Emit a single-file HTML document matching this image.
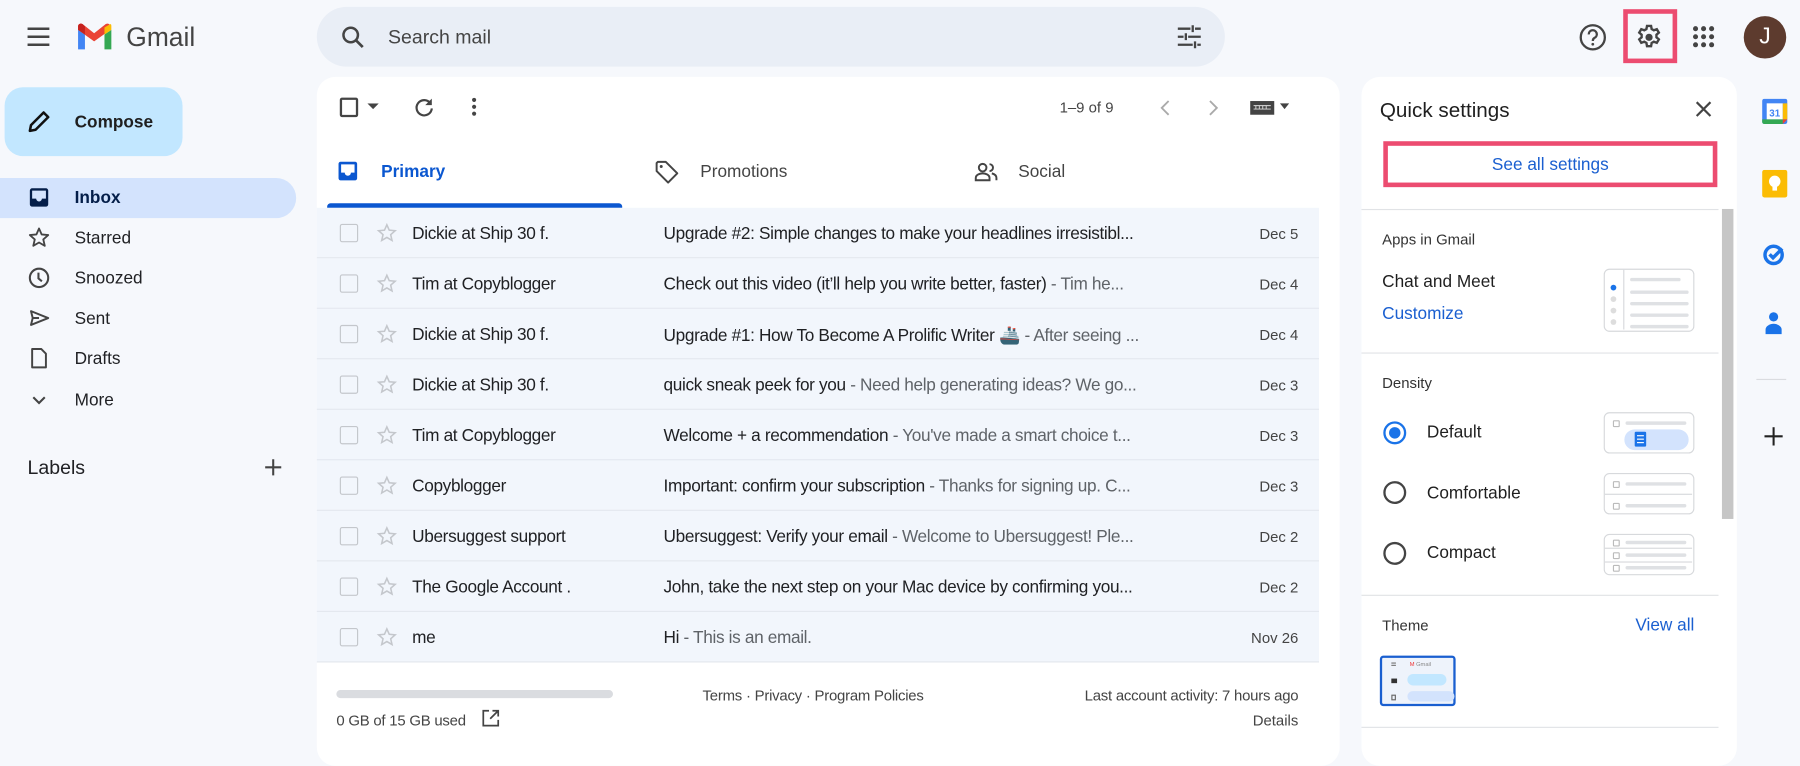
<!DOCTYPE html>
<html><head><meta charset="utf-8">
<style>
*{box-sizing:border-box;margin:0;padding:0}
html,body{width:1800px;height:744px;overflow:hidden;background:#f6f8fc}
body{font-family:"Liberation Sans",Arial,sans-serif;color:#202124}
#w{position:absolute;left:0;top:0;width:1568px;height:648px;transform:scale(1.14796,1.14815);transform-origin:0 0;background:#f6f8fc}
.a{position:absolute}
svg{display:block}
.row{position:absolute;left:0;width:873px;height:44px;background:#f2f6fc;border-bottom:1px solid #e3e7ee;font-size:15px}
.row .cb{position:absolute;left:20px;top:14px;width:16px;height:16px;border:1.6px solid #c4c7cc;border-radius:2px}
.row .st{position:absolute;left:52px;top:13px}
.row .sn{position:absolute;left:83px;top:14px;color:#202124;letter-spacing:-0.3px}
.row .sb{position:absolute;left:302px;top:14px;width:450px;white-space:nowrap;overflow:hidden;text-overflow:ellipsis;letter-spacing:-0.3px}
.row .sb span{color:#5f6368}
.row .dt{position:absolute;right:18px;top:15px;font-size:13px;color:#444}
.nav{position:absolute;left:0;width:257px;height:34px;font-size:15px;color:#202124}
.nav .ic{position:absolute;left:24px;top:7px}
.nav .t{position:absolute;left:65px;top:9px}
.hr{position:absolute;height:1px;background:#e1e3e6}
.blue{color:#0b57d0}
.ill{position:absolute;left:1397px;width:79px;border:1.5px solid #d7d9dc;border-radius:5px;background:#fff}
.ln{position:absolute;height:3px;background:#dfe1e4;border-radius:2px}
.sq{position:absolute;width:6px;height:6px;border:1px solid #bbb;border-radius:1px}
</style></head><body>
<div id="w">
<svg class="a" style="left:22px;top:22px" width="24" height="20" viewBox="0 0 24 20"><path d="M2 3h19M2 10h19M2 17h19" stroke="#444" stroke-width="2.2"/></svg>
<svg class="a" style="left:66px;top:20px" width="33" height="25" viewBox="0 0 33 25">
<path d="M2 6v17h6V10z" fill="#4285f4"/><path d="M25 10v13h6V6z" fill="#34a853"/>
<path d="M2 6l14 10 14-10V3c0-2-2-3-4-2L16 9 6 1C4 0 2 1 2 3z" fill="#ea4335"/>
<path d="M25 4l5-3c1 0 1 1 1 2v3l-6 4z" fill="#fbbc04"/><path d="M2 3c0-2 2-3 4-2l2 2v7L2 6z" fill="#c5221f"/></svg>
<div class="a" style="left:110px;top:19px;font-size:23px;color:#444">Gmail</div>
<div class="a" style="left:276px;top:6px;width:791px;height:52px;background:#e9eef6;border-radius:26px"></div>
<svg class="a" style="left:296px;top:21px" width="24" height="24" viewBox="0 0 24 24"><circle cx="9.5" cy="9.5" r="6.3" fill="none" stroke="#444" stroke-width="2.2"/><path d="M14 14l6 6" stroke="#444" stroke-width="2.4"/></svg>
<div class="a" style="left:338px;top:23px;font-size:17px;color:#444">Search mail</div>
<svg class="a" style="left:1024px;top:21px" width="24" height="22" viewBox="0 0 24 22"><path d="M2 4h11M17 4h5M2 11h5M11 11h11M2 18h13M19 18h3M15 1v6M9 8v6M17 15v6" stroke="#444" stroke-width="2"/></svg>
<svg class="a" style="left:1375px;top:20px" width="25" height="25" viewBox="0 0 25 25"><circle cx="12.5" cy="12.5" r="10.5" fill="none" stroke="#444" stroke-width="2"/><path d="M9 10a3.5 3.5 0 1 1 5 3c-1.3.7-1.5 1.4-1.5 2.7" fill="none" stroke="#444" stroke-width="2"/><circle cx="12.5" cy="18.5" r="1.2" fill="#444"/></svg>
<div class="a" style="left:1414px;top:8px;width:47px;height:47px;border:4px solid #ec4c70"></div>
<svg class="a" style="left:1424px;top:20px" width="25" height="25" viewBox="0 0 24 24"><path fill="none" stroke="#444" stroke-width="2" d="M10.3 2.5h3.4l.5 2.6 1.8 1 2.5-.9 1.7 2.9-2 1.7v2.2l2 1.7-1.7 2.9-2.5-.9-1.8 1-.5 2.7h-3.4l-.5-2.7-1.8-1-2.5.9-1.7-2.9 2-1.7v-2.2l-2-1.7 1.7-2.9 2.5.9 1.8-1z"/><circle cx="12" cy="12" r="3" fill="#444"/></svg>
<svg class="a" style="left:1474px;top:22px" width="20" height="20" viewBox="0 0 20 20" fill="#444"><circle cx="3" cy="3" r="2.2"/><circle cx="10" cy="3" r="2.2"/><circle cx="17" cy="3" r="2.2"/><circle cx="3" cy="10" r="2.2"/><circle cx="10" cy="10" r="2.2"/><circle cx="17" cy="10" r="2.2"/><circle cx="3" cy="17" r="2.2"/><circle cx="10" cy="17" r="2.2"/><circle cx="17" cy="17" r="2.2"/></svg>
<div class="a" style="left:1519px;top:14px;width:37px;height:37px;border-radius:50%;background:#5d3b2e;color:#fff;font-size:20px;text-align:center;line-height:37px">J</div>

<div class="a" style="left:4px;top:76px;width:155px;height:60px;background:#c2e7ff;border-radius:16px"></div>
<svg class="a" style="left:23px;top:95px" width="22" height="22" viewBox="0 0 22 22"><path d="M3 19l1-5L15 3l4 4L8 18z" fill="none" stroke="#111" stroke-width="2.2" stroke-linejoin="round"/></svg>
<div class="a" style="left:65px;top:98px;font-size:15px;font-weight:bold;color:#1f1f1f">Compose</div>
<div class="a" style="left:0;top:155px;width:258px;height:35px;background:#d3e3fd;border-radius:0 18px 18px 0"></div>
<div class="nav" style="top:155px"><svg class="ic" width="20" height="20" viewBox="0 0 20 20"><rect x="2" y="2" width="16" height="16" rx="2" fill="#041e49"/><path d="M4 4h12v7h-3.5a2.5 2.5 0 0 1-5 0H4z" fill="#d3e3fd"/></svg><div class="t" style="font-weight:bold;color:#041e49">Inbox</div></div>
<div class="nav" style="top:190px"><svg class="ic" width="20" height="20" viewBox="0 0 20 20"><path d="M10 2l2.3 5.2 5.7.5-4.3 3.8 1.3 5.6L10 14.2 5 17.1l1.3-5.6L2 7.7l5.7-.5z" fill="none" stroke="#444" stroke-width="1.6" stroke-linejoin="round"/></svg><div class="t">Starred</div></div>
<div class="nav" style="top:225px"><svg class="ic" width="20" height="20" viewBox="0 0 20 20"><circle cx="10" cy="10" r="8" fill="none" stroke="#444" stroke-width="1.8"/><path d="M9.5 5.5v5l3 2.5" fill="none" stroke="#444" stroke-width="1.8"/></svg><div class="t">Snoozed</div></div>
<div class="nav" style="top:260px"><svg class="ic" width="20" height="20" viewBox="0 0 20 20"><path d="M3 4l15 6-15 6 1.5-6z M4.5 10H10" fill="none" stroke="#444" stroke-width="1.7" stroke-linejoin="round"/></svg><div class="t">Sent</div></div>
<div class="nav" style="top:295px"><svg class="ic" width="20" height="20" viewBox="0 0 20 20"><path d="M4 2h8l4 4v12H4z" fill="none" stroke="#444" stroke-width="1.7" stroke-linejoin="round"/></svg><div class="t">Drafts</div></div>
<div class="nav" style="top:331px"><svg class="ic" width="20" height="20" viewBox="0 0 20 20"><path d="M5 8l5 5 5-5" fill="none" stroke="#444" stroke-width="1.8"/></svg><div class="t">More</div></div>
<div class="a" style="left:24px;top:398px;font-size:17px;color:#202124">Labels</div>
<svg class="a" style="left:230px;top:399px" width="16" height="16" viewBox="0 0 16 16"><path d="M8 1v14M1 8h14" stroke="#444" stroke-width="1.8"/></svg>

<div class="a" style="left:276px;top:67px;width:891px;height:600px;background:#fff;border-radius:16px"></div>
<div class="a" style="left:296px;top:85px;width:16px;height:17px;border:2px solid #444;border-radius:2px"></div>
<svg class="a" style="left:320px;top:90px" width="10" height="6" viewBox="0 0 10 6"><path d="M0 0h10L5 5z" fill="#444"/></svg>
<svg class="a" style="left:360px;top:84px" width="19" height="19" viewBox="0 0 20 20"><path d="M15.5 6A7 7 0 1 0 17 11" fill="none" stroke="#444" stroke-width="2"/><path d="M17 2v6h-6z" fill="#444"/></svg>
<svg class="a" style="left:410px;top:84px" width="6" height="18" viewBox="0 0 6 18" fill="#444"><circle cx="3" cy="3" r="1.8"/><circle cx="3" cy="9" r="1.8"/><circle cx="3" cy="15" r="1.8"/></svg>
<div class="a" style="left:923px;top:86px;font-size:13px;color:#444">1–9 of 9</div>
<svg class="a" style="left:1010px;top:86px" width="10" height="16" viewBox="0 0 10 16"><path d="M8 2L2 8l6 6" fill="none" stroke="#aaa" stroke-width="1.6"/></svg>
<svg class="a" style="left:1052px;top:86px" width="10" height="16" viewBox="0 0 10 16"><path d="M2 2l6 6-6 6" fill="none" stroke="#aaa" stroke-width="1.6"/></svg>
<svg class="a" style="left:1089px;top:87px" width="34" height="13" viewBox="0 0 34 13"><rect x="0" y="1" width="21" height="12" fill="#444"/><path d="M3 5h15M3 8h15M5 5v3M8 5v3M11 5v3M14 5v3" stroke="#ddd" stroke-width="0.8"/><path d="M26 3h8l-4 5z" fill="#444"/></svg>

<svg class="a" style="left:294px;top:140px" width="18" height="18" viewBox="0 0 20 20"><rect x="1" y="1" width="18" height="18" rx="2" fill="#0b57d0"/><path d="M3.5 3.5h13v8h-3.5a3 3 0 0 1-6 0H3.5z" fill="#fff"/></svg>
<div class="a blue" style="left:332px;top:141px;font-size:15px;font-weight:bold">Primary</div>
<div class="a" style="left:285px;top:177px;width:257px;height:4px;background:#0b57d0;border-radius:3px 3px 0 0"></div>
<svg class="a" style="left:570px;top:139px" width="22" height="22" viewBox="0 0 22 22"><path d="M2 3v7l10 10 8-8L10 2H3z" fill="none" stroke="#444" stroke-width="1.7" stroke-linejoin="round"/><circle cx="6" cy="6" r="1.3" fill="#444"/></svg>
<div class="a" style="left:610px;top:141px;font-size:15px;color:#444">Promotions</div>
<svg class="a" style="left:848px;top:140px" width="22" height="20" viewBox="0 0 22 20"><circle cx="8" cy="6" r="3.3" fill="none" stroke="#444" stroke-width="1.7"/><path d="M2 17v-2c0-3 4-4 6-4s6 1 6 4v2z" fill="none" stroke="#444" stroke-width="1.7"/><path d="M14 3a3 3 0 0 1 0 6M16 11c2 .5 4 1.5 4 4v2" fill="none" stroke="#444" stroke-width="1.7"/></svg>
<div class="a" style="left:887px;top:141px;font-size:15px;color:#444">Social</div>

<div class="a" style="left:276px;top:181px;width:873px;height:396px">
<div class="row" style="top:0"><div class="cb"></div><svg class="st" width="18" height="18" viewBox="0 0 20 20"><path d="M10 2l2.3 5.2 5.7.5-4.3 3.8 1.3 5.6L10 14.2 5 17.1l1.3-5.6L2 7.7l5.7-.5z" fill="none" stroke="#c4c7cc" stroke-width="1.5"/></svg><div class="sn">Dickie at Ship 30 f.</div><div class="sb">Upgrade #2: Simple changes to make your headlines irresistibl...</div><div class="dt">Dec 5</div></div>
<div class="row" style="top:44px"><div class="cb"></div><svg class="st" width="18" height="18" viewBox="0 0 20 20"><path d="M10 2l2.3 5.2 5.7.5-4.3 3.8 1.3 5.6L10 14.2 5 17.1l1.3-5.6L2 7.7l5.7-.5z" fill="none" stroke="#c4c7cc" stroke-width="1.5"/></svg><div class="sn">Tim at Copyblogger</div><div class="sb">Check out this video (it’ll help you write better, faster) <span>- Tim he...</span></div><div class="dt">Dec 4</div></div>
<div class="row" style="top:88px"><div class="cb"></div><svg class="st" width="18" height="18" viewBox="0 0 20 20"><path d="M10 2l2.3 5.2 5.7.5-4.3 3.8 1.3 5.6L10 14.2 5 17.1l1.3-5.6L2 7.7l5.7-.5z" fill="none" stroke="#c4c7cc" stroke-width="1.5"/></svg><div class="sn">Dickie at Ship 30 f.</div><div class="sb">Upgrade #1: How To Become A Prolific Writer 🚢 <span>- After seeing ...</span></div><div class="dt">Dec 4</div></div>
<div class="row" style="top:132px"><div class="cb"></div><svg class="st" width="18" height="18" viewBox="0 0 20 20"><path d="M10 2l2.3 5.2 5.7.5-4.3 3.8 1.3 5.6L10 14.2 5 17.1l1.3-5.6L2 7.7l5.7-.5z" fill="none" stroke="#c4c7cc" stroke-width="1.5"/></svg><div class="sn">Dickie at Ship 30 f.</div><div class="sb">quick sneak peek for you <span>- Need help generating ideas? We go...</span></div><div class="dt">Dec 3</div></div>
<div class="row" style="top:176px"><div class="cb"></div><svg class="st" width="18" height="18" viewBox="0 0 20 20"><path d="M10 2l2.3 5.2 5.7.5-4.3 3.8 1.3 5.6L10 14.2 5 17.1l1.3-5.6L2 7.7l5.7-.5z" fill="none" stroke="#c4c7cc" stroke-width="1.5"/></svg><div class="sn">Tim at Copyblogger</div><div class="sb">Welcome + a recommendation <span>- You've made a smart choice t...</span></div><div class="dt">Dec 3</div></div>
<div class="row" style="top:220px"><div class="cb"></div><svg class="st" width="18" height="18" viewBox="0 0 20 20"><path d="M10 2l2.3 5.2 5.7.5-4.3 3.8 1.3 5.6L10 14.2 5 17.1l1.3-5.6L2 7.7l5.7-.5z" fill="none" stroke="#c4c7cc" stroke-width="1.5"/></svg><div class="sn">Copyblogger</div><div class="sb">Important: confirm your subscription <span>- Thanks for signing up. C...</span></div><div class="dt">Dec 3</div></div>
<div class="row" style="top:264px"><div class="cb"></div><svg class="st" width="18" height="18" viewBox="0 0 20 20"><path d="M10 2l2.3 5.2 5.7.5-4.3 3.8 1.3 5.6L10 14.2 5 17.1l1.3-5.6L2 7.7l5.7-.5z" fill="none" stroke="#c4c7cc" stroke-width="1.5"/></svg><div class="sn">Ubersuggest support</div><div class="sb">Ubersuggest: Verify your email <span>- Welcome to Ubersuggest! Ple...</span></div><div class="dt">Dec 2</div></div>
<div class="row" style="top:308px"><div class="cb"></div><svg class="st" width="18" height="18" viewBox="0 0 20 20"><path d="M10 2l2.3 5.2 5.7.5-4.3 3.8 1.3 5.6L10 14.2 5 17.1l1.3-5.6L2 7.7l5.7-.5z" fill="none" stroke="#c4c7cc" stroke-width="1.5"/></svg><div class="sn">The Google Account .</div><div class="sb">John, take the next step on your Mac device by confirming you...</div><div class="dt">Dec 2</div></div>
<div class="row" style="top:352px"><div class="cb"></div><svg class="st" width="18" height="18" viewBox="0 0 20 20"><path d="M10 2l2.3 5.2 5.7.5-4.3 3.8 1.3 5.6L10 14.2 5 17.1l1.3-5.6L2 7.7l5.7-.5z" fill="none" stroke="#c4c7cc" stroke-width="1.5"/></svg><div class="sn">me</div><div class="sb">Hi <span>- This is an email.</span></div><div class="dt">Nov 26</div></div>
</div>

<div class="a" style="left:293px;top:601px;width:241px;height:7px;background:#dadce0;border-radius:4px"></div>
<div class="a" style="left:293px;top:620px;font-size:13px;color:#444;letter-spacing:-0.2px">0 GB of 15 GB used</div>
<svg class="a" style="left:419px;top:617px" width="17" height="17" viewBox="0 0 17 17"><path d="M7 2H2v13h13v-5M10 2h5v5M15 2L8 9" fill="none" stroke="#444" stroke-width="1.5"/></svg>
<div class="a" style="left:612px;top:598px;font-size:13px;color:#444;letter-spacing:-0.2px">Terms · Privacy · Program Policies</div>
<div class="a" style="left:900px;width:231px;text-align:right;top:598px;font-size:13px;color:#444;letter-spacing:-0.2px">Last account activity: 7 hours ago</div>
<div class="a" style="left:1000px;width:131px;text-align:right;top:620px;font-size:13px;color:#444">Details</div>

<div class="a" style="left:1186px;top:67px;width:327px;height:600px;background:#fff;border-radius:16px"></div>
<div class="a" style="left:1202px;top:86px;font-size:18px;color:#1f1f1f">Quick settings</div>
<svg class="a" style="left:1476px;top:87px" width="16" height="16" viewBox="0 0 16 16"><path d="M2 2l12 12M14 2L2 14" stroke="#444" stroke-width="1.9"/></svg>
<div class="a" style="left:1205px;top:123px;width:291px;height:40px;border:4px solid #ec4c70"></div>
<div class="a blue" style="left:1205px;top:135px;width:291px;text-align:center;font-size:15px;color:#1a5fd0">See all settings</div>
<div class="hr" style="left:1186px;top:182px;width:311px"></div>
<div class="a" style="left:1500px;top:182px;width:10px;height:270px;background:#c6c6c6"></div>
<div class="a" style="left:1204px;top:201px;font-size:13px;color:#333">Apps in Gmail</div>
<div class="a" style="left:1204px;top:237px;font-size:15px;color:#1f1f1f">Chat and Meet</div>
<div class="a" style="left:1204px;top:265px;font-size:15px;color:#1a5fd0">Customize</div>
<div class="ill" style="top:234px;height:55px">
<div class="a" style="left:16px;top:0;width:1px;height:52px;background:#d7d9dc"></div>
<div class="a" style="left:5px;top:13px;width:5px;height:5px;border-radius:50%;background:#1a73e8"></div>
<div class="a" style="left:5px;top:23px;width:5px;height:5px;border-radius:50%;background:#ddd"></div>
<div class="a" style="left:5px;top:33px;width:5px;height:5px;border-radius:50%;background:#ddd"></div>
<div class="a" style="left:5px;top:43px;width:5px;height:5px;border-radius:50%;background:#ddd"></div>
<div class="ln" style="left:22px;top:7px;width:44px"></div>
<div class="ln" style="left:22px;top:18px;width:51px"></div>
<div class="ln" style="left:22px;top:28px;width:51px"></div>
<div class="ln" style="left:22px;top:38px;width:51px"></div>
<div class="ln" style="left:22px;top:48px;width:51px"></div>
</div>
<div class="hr" style="left:1186px;top:307px;width:311px"></div>
<div class="a" style="left:1204px;top:326px;font-size:13px;color:#333">Density</div>
<div class="a" style="left:1205px;top:367px;width:20px;height:20px;border:2px solid #1a73e8;border-radius:50%"></div>
<div class="a" style="left:1210px;top:372px;width:10px;height:10px;background:#1a73e8;border-radius:50%"></div>
<div class="a" style="left:1243px;top:368px;font-size:15px;color:#1f1f1f">Default</div>
<div class="a" style="left:1205px;top:419px;width:20px;height:20px;border:2px solid #444;border-radius:50%"></div>
<div class="a" style="left:1243px;top:421px;font-size:15px;color:#1f1f1f">Comfortable</div>
<div class="a" style="left:1205px;top:472px;width:20px;height:20px;border:2px solid #444;border-radius:50%"></div>
<div class="a" style="left:1243px;top:473px;font-size:15px;color:#1f1f1f">Compact</div>
<div class="ill" style="top:359px;height:36px">
<div class="sq" style="left:7px;top:6px"></div><div class="ln" style="left:18px;top:7px;width:53px"></div>
<div class="a" style="left:17px;top:14px;width:56px;height:18px;border-radius:9px;background:#d3e3fd"></div>
<div class="a" style="left:26px;top:16px;width:10px;height:13px;background:#1a73e8;border-radius:1px"></div>
<div class="a" style="left:28px;top:19px;width:6px;height:1px;background:#fff;box-shadow:0 3px 0 #fff,0 6px 0 #fff"></div>
</div>
<div class="ill" style="top:412px;height:36px">
<div class="sq" style="left:7px;top:6px"></div><div class="ln" style="left:18px;top:7px;width:53px"></div>
<div class="a" style="left:0;top:17px;width:76px;height:1px;background:#d7d9dc"></div>
<div class="sq" style="left:7px;top:25px"></div><div class="ln" style="left:18px;top:26px;width:53px"></div>
</div>
<div class="ill" style="top:465px;height:36px">
<div class="sq" style="left:7px;top:4px"></div><div class="ln" style="left:18px;top:5px;width:53px"></div>
<div class="a" style="left:0;top:11px;width:76px;height:1px;background:#d7d9dc"></div>
<div class="sq" style="left:7px;top:15px"></div><div class="ln" style="left:18px;top:16px;width:53px"></div>
<div class="a" style="left:0;top:23px;width:76px;height:1px;background:#d7d9dc"></div>
<div class="sq" style="left:7px;top:26px"></div><div class="ln" style="left:18px;top:27px;width:53px"></div>
</div>
<div class="hr" style="left:1186px;top:518px;width:311px"></div>
<div class="a" style="left:1204px;top:537px;font-size:13px;color:#333">Theme</div>
<div class="a" style="left:1380px;width:96px;text-align:right;top:536px;font-size:15px;color:#1a5fd0">View all</div>
<div class="a" style="left:1202px;top:571px;width:66px;height:44px;border:2px solid #1a5fd0;border-radius:3px;background:#eef3fb">
<div class="a" style="left:8px;top:4px;width:4px;height:1px;background:#777;box-shadow:0 2px 0 #777"></div>
<div class="a" style="left:24px;top:3px;font-size:5px;color:#e33">M<span style="color:#888"> Gmail</span></div>
<div class="a" style="left:8px;top:18px;width:5px;height:4px;background:#333"></div>
<div class="a" style="left:22px;top:14px;width:34px;height:10px;border-radius:5px;background:#c2e7ff"></div>
<div class="a" style="left:8px;top:32px;width:4px;height:5px;border:1px solid #666"></div>
<div class="a" style="left:22px;top:29px;width:41px;height:9px;border-radius:5px;background:#d3e3fd"></div>
</div>
<div class="hr" style="left:1186px;top:633px;width:311px"></div>

<svg class="a" style="left:1535px;top:86px" width="22" height="22" viewBox="0 0 22 22"><rect x="0" y="0" width="22" height="22" rx="2" fill="#4285f4"/><rect x="4" y="4" width="14" height="14" fill="#fff"/><path d="M0 18h18v4H2a2 2 0 0 1-2-2z" fill="#34a853"/><path d="M18 4h4v14h-4z" fill="#fbbc04"/><path d="M18 18h4l-4 4z" fill="#ea4335"/><text x="11" y="15.5" font-size="8.5" text-anchor="middle" fill="#4285f4" font-family="Liberation Sans" font-weight="bold">31</text></svg>
<svg class="a" style="left:1535px;top:148px" width="22" height="24" viewBox="0 0 22 24"><rect x="0" y="0" width="22" height="24" rx="2" fill="#fbbc04"/><circle cx="11" cy="10" r="5" fill="#fff"/><rect x="9" y="14" width="4" height="4" fill="#fff"/></svg>
<svg class="a" style="left:1535px;top:210px" width="22" height="22" viewBox="0 0 22 22"><circle cx="10" cy="12" r="7.5" fill="none" stroke="#1a73e8" stroke-width="3"/><path d="M6.5 11.5l3 3 8-8" fill="none" stroke="#1a73e8" stroke-width="3"/></svg>
<svg class="a" style="left:1536px;top:271px" width="18" height="22" viewBox="0 0 18 22"><circle cx="9" cy="5" r="4" fill="#1a73e8"/><path d="M2 20v-4c0-3 4-5 7-5s7 2 7 5v4z" fill="#1a73e8"/></svg>
<div class="a" style="left:1530px;top:330px;width:26px;height:1px;background:#dadce0"></div>
<svg class="a" style="left:1537px;top:372px" width="16" height="16" viewBox="0 0 16 16"><path d="M8 0v16M0 8h16" stroke="#222" stroke-width="1.8"/></svg>
</div>
</body></html>
